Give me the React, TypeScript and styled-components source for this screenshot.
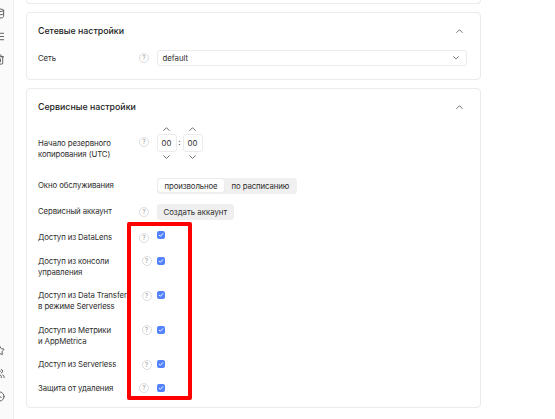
import React from 'react';
import styled, { createGlobalStyle } from 'styled-components';
import { Database, List, Trash2, Star, Users, Clock } from 'lucide-react';

const text = '#2e2e2e';
const muted = '#9a9a9a';
const line = '#ebebeb';
const brand = '#5282ff';

const GlobalStyle = createGlobalStyle`
  html, body {
    margin: 0;
    padding: 0;
    background: #fff;
  }
  body {
    font-family: Inter, 'Noto Sans', sans-serif;
    color: ${text};
  }
`;

const Chevron = ({ down, size = 7 }: { down?: boolean; size?: number }) => (
  <svg width={size} height={size * 0.6} viewBox="0 0 10 6" fill="none">
    <path
      d={down ? 'M1 1l4 4 4-4' : 'M1 5l4-4 4 4'}
      stroke="#555"
      strokeWidth="1.2"
      strokeLinecap="round"
      strokeLinejoin="round"
    />
  </svg>
);

const Help = () => <HelpIcon>?</HelpIcon>;

const Check = () => (
  <CheckBox>
    <svg width="6" height="6" viewBox="0 0 10 10" fill="none">
      <path d="M2 5.2l2 2 4-4.4" stroke="#fff" strokeWidth="1.6" strokeLinecap="round" strokeLinejoin="round" />
    </svg>
  </CheckBox>
);

const TimeField = ({ value }: { value: string }) => (
  <TimeCol>
    <Chevron />
    <TimeBox>{value}</TimeBox>
    <Chevron down />
  </TimeCol>
);

const accessRows = [
  { label: ['Доступ из DataLens'] },
  { label: ['Доступ из консоли', 'управления'] },
  { label: ['Доступ из Data Transfer', 'в режиме Serverless'] },
  { label: ['Доступ из Метрики', 'и AppMetrica'] },
  { label: ['Доступ из Serverless'] },
  { label: ['Защита от удаления'] },
];

const App = () => {
  return (
    <>
      <GlobalStyle />
      <Page>
        <Sidebar>
          <IconGroup>
            <Database size={11} />
            <List size={11} />
            <Trash2 size={11} />
          </IconGroup>
          <IconGroup>
            <Star size={11} />
            <Users size={11} />
            <Clock size={11} />
          </IconGroup>
        </Sidebar>
        <Content>
          <CardStub />
          <Card>
            <CardHead>
              <Title>Сетевые настройки</Title>
              <Chevron />
            </CardHead>
            <Row $gap={13}>
              <Label $pad={2.5}>Сеть</Label>
              <HelpCell $pad={2.5}>
                <Help />
              </HelpCell>
              <Select>
                default
                <Chevron down size={6} />
              </Select>
            </Row>
          </Card>
          <Card>
            <CardHead>
              <Title>Сервисные настройки</Title>
              <Chevron />
            </CardHead>
            <Row $gap={12}>
              <Label $pad={12.5}>
                Начало резервного
                <br />
                копирования (UTC)
              </Label>
              <HelpCell $pad={11.5}>
                <Help />
              </HelpCell>
              <TimeGroup>
                <TimeField value="00" />
                <Colon>:</Colon>
                <TimeField value="00" />
              </TimeGroup>
            </Row>
            <Row $gap={18}>
              <Label $pad={2}>Окно обслуживания</Label>
              <HelpCell />
              <Segmented>
                <Segment $active>произвольное</Segment>
                <Segment>по расписанию</Segment>
              </Segmented>
            </Row>
            <Row $gap={10}>
              <Label $pad={2.5}>Сервисный аккаунт</Label>
              <HelpCell $pad={2.5}>
                <Help />
              </HelpCell>
              <Button>Создать аккаунт</Button>
            </Row>
            {accessRows.map((row, i) => (
              <Row key={i} $gap={12.5}>
                <Label>
                  {row.label.map((l, j) => (
                    <React.Fragment key={j}>
                      {j > 0 && <br />}
                      {l}
                    </React.Fragment>
                  ))}
                </Label>
                <HelpCell $shift={i > 0 && i < 5 ? 2.5 : 0}>
                  <Help />
                </HelpCell>
                <CheckCell $top={i === 0 ? -1.5 : 1}>
                  <Check />
                </CheckCell>
              </Row>
            ))}
          </Card>
          <Highlight />
        </Content>
      </Page>
    </>
  );
};

const Page = styled.div`
  display: flex;
  width: 555px;
  height: 419px;
  overflow: hidden;
`;

const Sidebar = styled.div`
  width: 14px;
  flex-shrink: 0;
  display: flex;
  flex-direction: column;
  justify-content: space-between;
  padding: 8px 0 17px;
  box-sizing: border-box;
  background: #fafafa;
  border-right: 1px solid #eeeeee;
  overflow: hidden;
`;

const IconGroup = styled.div`
  display: flex;
  flex-direction: column;
  gap: 12px;
  margin-left: -6px;
  color: #555;
`;

const Content = styled.div`
  position: relative;
  display: flex;
  flex-direction: column;
  gap: 8px;
  padding-left: 12px;
  width: 455px;
`;

const CardStub = styled.div`
  height: 3px;
  border: 1px solid ${line};
  border-top: none;
  border-radius: 0 0 4px 4px;
`;

const Card = styled.div`
  display: flex;
  flex-direction: column;
  border: 1px solid ${line};
  border-radius: 4px;
  padding: 12px 13px 13px 11px;
  background: #fff;
`;

const CardHead = styled.div`
  display: flex;
  align-items: center;
  justify-content: space-between;
  height: 12px;
  padding-right: 4px;
`;

const Title = styled.div`
  font-size: 8.8px;
  font-weight: 500;
  color: #222;
  line-height: 12px;
`;

const Row = styled.div<{ $gap: number }>`
  display: grid;
  grid-template-columns: 99.5px 19px 1fr;
  align-items: start;
  margin-top: ${({ $gap }) => $gap}px;
`;

const Label = styled.div<{ $pad?: number }>`
  font-size: 7.8px;
  letter-spacing: -0.1px;
  line-height: 11px;
  color: ${text};
  white-space: nowrap;
  padding-top: ${({ $pad }) => $pad ?? 0}px;
`;

const HelpCell = styled.div<{ $pad?: number; $shift?: number }>`
  height: 11px;
  display: flex;
  align-items: center;
  padding-top: ${({ $pad }) => $pad ?? 0}px;
  padding-left: ${({ $shift }) => 1.5 + ($shift ?? 0)}px;
`;

const HelpIcon = styled.span`
  width: 8px;
  height: 8px;
  border: 0.8px solid #dcdcdc;
  border-radius: 50%;
  display: flex;
  align-items: center;
  justify-content: center;
  font-size: 6px;
  color: ${muted};
  line-height: 1;
`;

const Select = styled.div`
  height: 16px;
  box-sizing: border-box;
  border: 1px solid ${line};
  border-radius: 3px;
  display: flex;
  align-items: center;
  justify-content: space-between;
  padding: 0 7px 0 5px;
  font-size: 7.8px;
  color: ${text};
`;

const TimeGroup = styled.div`
  display: flex;
  align-items: center;
  gap: 1px;
`;

const TimeCol = styled.div`
  display: flex;
  flex-direction: column;
  align-items: center;
  gap: 3px;
  padding-top: 2px;
`;

const TimeBox = styled.div`
  width: 20px;
  height: 18px;
  box-sizing: border-box;
  border: 1px solid ${line};
  border-radius: 3px;
  display: flex;
  align-items: center;
  justify-content: center;
  font-size: 7.8px;
  color: ${text};
`;

const Colon = styled.span`
  font-size: 8px;
  width: 4px;
  text-align: center;
`;

const Segmented = styled.div`
  display: inline-flex;
  justify-self: start;
  height: 16px;
  box-sizing: border-box;
  padding: 1.5px;
  gap: 1px;
  background: #f0f0f0;
  border-radius: 3px;
`;

const Segment = styled.div<{ $active?: boolean }>`
  display: flex;
  align-items: center;
  padding: 0 6.5px;
  font-size: 7.8px;
  letter-spacing: -0.1px;
  color: ${text};
  border-radius: 2px;
  background: ${({ $active }) => ($active ? '#fff' : 'transparent')};
  box-shadow: ${({ $active }) => ($active ? '0 0 1px rgba(0,0,0,0.15)' : 'none')};
`;

const Button = styled.div`
  justify-self: start;
  height: 16px;
  display: flex;
  align-items: center;
  padding: 0 7px;
  font-size: 7.8px;
  color: ${text};
  background: #efefef;
  border-radius: 3px;
`;

const CheckCell = styled.div<{ $top: number }>`
  padding-top: ${({ $top }) => Math.max($top, 0)}px;
  margin-top: ${({ $top }) => Math.min($top, 0)}px;
`;

const CheckBox = styled.span`
  width: 8px;
  height: 8px;
  border-radius: 2px;
  background: ${brand};
  display: flex;
  align-items: center;
  justify-content: center;
`;

const Highlight = styled.div`
  position: absolute;
  left: 113px;
  top: 222px;
  width: 65px;
  height: 178px;
  box-sizing: border-box;
  border: 4px solid #ff0000;
  border-radius: 2px;
  pointer-events: none;
`;

export default App;
